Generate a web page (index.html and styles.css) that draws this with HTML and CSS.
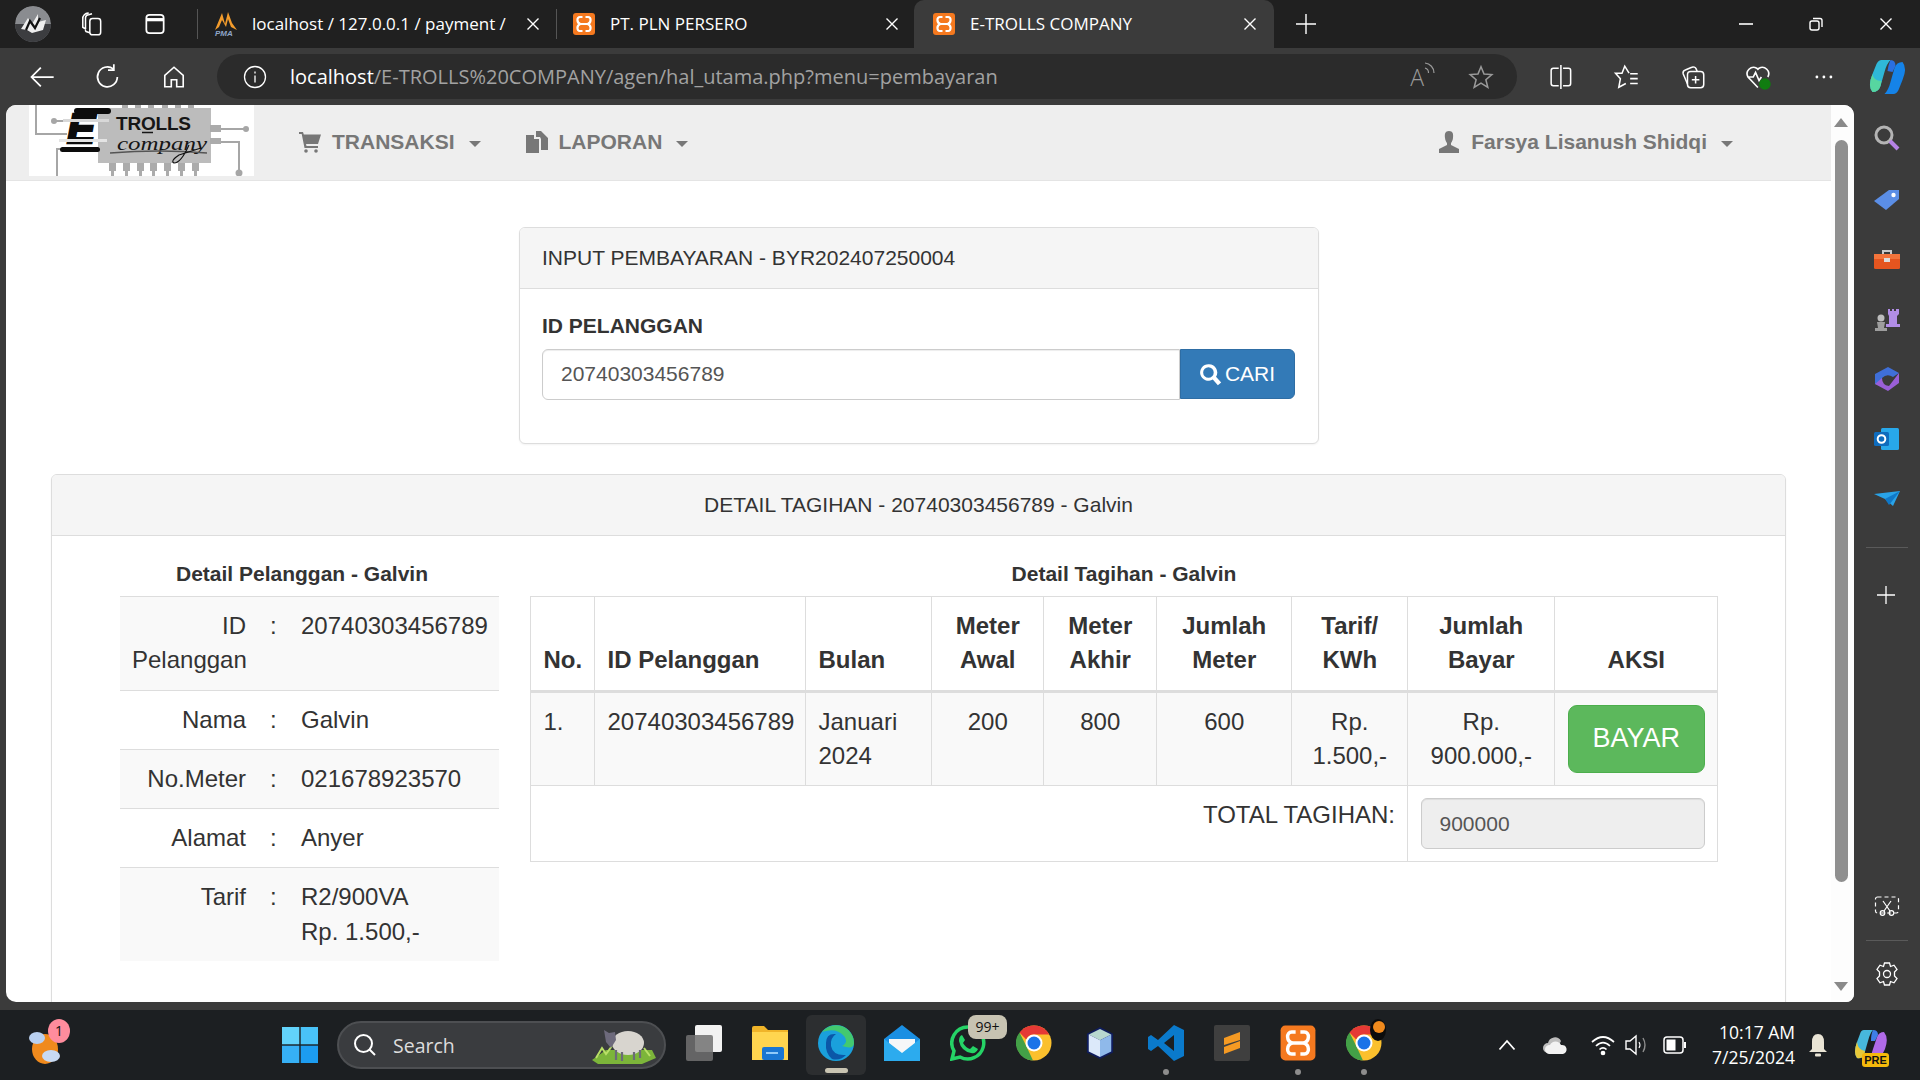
FILE: index.html
```html
<!DOCTYPE html>
<html lang="id">
<head>
<meta charset="utf-8">
<title>E-TROLLS COMPANY</title>
<link rel="stylesheet" href="styles.css">
</head>
<body>
<svg class="sprite" width="0" height="0">
  <defs>
    <symbol id="xampp" viewBox="0 0 24 24">
      <rect x="1" y="1" width="22" height="22" rx="3" fill="#f5791f"/>
      <path d="M10.500 5H8C4.500 5 4.500 11 8.500 12C4.500 13 4.500 19 8 19H10.500M13.500 5H16C19.500 5 19.500 11 15.500 12C19.500 13 19.500 19 16 19H13.500M8.500 12H15.500" fill="none" stroke="#fff" stroke-width="2.200"/>
    </symbol>
    <symbol id="close" viewBox="0 0 16 16">
      <path d="M2.500 2.500L13.500 13.500M13.500 2.500L2.500 13.500" stroke="#fff" stroke-width="1.400" fill="none"/>
    </symbol>
    <symbol id="chrome" viewBox="0 0 36 36">
      <circle cx="18" cy="18" r="17.500" fill="#fbc02d"/>
      <path d="M18 .5A17.500 17.500 0 0 1 33.200 9.500H18A8.500 8.500 0 0 0 10.200 14.500L3.500 7.500A17.500 17.500 0 0 1 18 .5Z" fill="#e53935"/>
      <path d="M3.500 7.500L10.500 21.500L17 35.500A17.500 17.500 0 0 1 3.500 7.500Z" fill="#43a047"/>
      <circle cx="18" cy="18" r="8.500" fill="#fff"/>
      <circle cx="18" cy="18" r="6.500" fill="#1a73e8"/>
    </symbol>
    <symbol id="magnify" viewBox="0 0 20 20">
      <path d="M8.200 1A7.200 7.200 0 1 0 12 14.300L16.400 19.400L19.300 17L14.800 11.900A7.200 7.200 0 0 0 8.200 1ZM8.200 3.600A4.600 4.600 0 1 1 8.200 12.800A4.600 4.600 0 0 1 8.200 3.600Z" fill="#fff"/>
    </symbol>
  </defs>
</svg>

<header class="tabstrip">
  <span class="profile">
    <svg viewBox="0 0 36 36" width="36" height="36"><circle cx="18" cy="18" r="18" fill="#8a8c90"/><path d="M0 18H36V22A18 18 0 0 1 0 22Z" fill="#3c3d40"/><path d="M6 23L13 12L17 18L23 8L23 16L31 14L28 24L17 27L12 24Z" fill="#eee"/><path d="M11 24L15 15L20 22L25 12" stroke="#111" stroke-width="2.200" fill="none"/></svg>
  </span>
  <span class="strip-btn strip-btn-first">
    <svg viewBox="0 0 24 24" width="26" height="26" fill="none" stroke="#fff" stroke-width="1.400"><rect x="10" y="7" width="10" height="15" rx="2.500"/><path d="M10 20L6.500 19A2 2 0 0 1 6 17.500V6A3 3 0 0 1 9 3.500L12 2.500M6.500 17L3.500 15V7.500A5 5 0 0 1 9 2"/></svg>
  </span>
  <span class="strip-btn">
    <svg viewBox="0 0 24 24" width="26" height="26" fill="none" stroke="#fff" stroke-width="1.600"><rect x="4" y="3.500" width="16" height="17" rx="3"/><path d="M4 8H20" stroke-width="3"/></svg>
  </span>
  <span class="tab-sep tab-sep-first"></span>
  <div class="tab tab-first">
    <svg class="tab-icon" viewBox="0 0 24 24" width="24" height="24"><path d="M1 18L8 1L11 12L14 0L18 11L23 18L17 15L14 7L12 15L8 8L5 15Z" fill="#f39c2c"/><text x="1" y="24" class="pma">PMA</text></svg>
    <span class="tab-text">localhost / 127.0.0.1 / payment /</span>
    <svg class="tab-x" width="16" height="16"><use href="#close"/></svg>
  </div>
  <span class="tab-sep"></span>
  <div class="tab tab-second">
    <svg class="tab-icon" width="24" height="24"><use href="#xampp"/></svg>
    <span class="tab-text">PT. PLN PERSERO</span>
    <svg class="tab-x" width="16" height="16"><use href="#close"/></svg>
  </div>
  <div class="tab tab-active">
    <svg class="tab-icon" width="24" height="24"><use href="#xampp"/></svg>
    <span class="tab-text">E-TROLLS COMPANY</span>
    <svg class="tab-x" width="16" height="16"><use href="#close"/></svg>
  </div>
  <svg class="new-tab" viewBox="0 0 22 22" width="22" height="22"><path d="M11 1V21M1 11H21" stroke="#fff" stroke-width="1.400"/></svg>
  <div class="win-controls">
    <svg viewBox="0 0 16 16" width="16" height="16"><path d="M1 8H15" stroke="#fff" stroke-width="1.600"/></svg>
    <svg viewBox="0 0 16 16" width="16" height="16" fill="none" stroke="#fff" stroke-width="1.400"><rect x="2" y="5" width="9" height="9" rx="2"/><path d="M5 2.500H12A2 2 0 0 1 14 4.500V11"/></svg>
    <svg viewBox="0 0 16 16" width="16" height="16"><use href="#close"/></svg>
  </div>
</header>

<nav class="toolbar">
  <svg class="tool-back" viewBox="0 0 24 24" width="28" height="28" fill="none" stroke="#fff" stroke-width="1.500"><path d="M22 12H3M11 4L3 12L11 20"/></svg>
  <svg class="tool-reload" viewBox="0 0 24 24" width="28" height="28" fill="none" stroke="#fff" stroke-width="1.500"><path d="M20 12A8.500 8.500 0 1 1 16.500 5M17 1V6H12"/></svg>
  <svg class="tool-home" viewBox="0 0 24 24" width="26" height="26" fill="none" stroke="#fff" stroke-width="1.500"><path d="M3.500 10.500L12 3L20.500 10.500V21H14.500V14.500H9.500V21H3.500Z"/></svg>
  <div class="addressbar">
    <svg viewBox="0 0 24 24" width="24" height="24" fill="none" stroke="#fff" stroke-width="1.300"><circle cx="12" cy="12" r="10.500"/><path d="M12 10.500V17.500M12 6.500V8.500"/></svg>
    <span class="url"><span class="url-host">localhost</span>/E-TROLLS%20COMPANY/agen/hal_utama.php?menu=pembayaran</span>
    <span class="read-aloud">A<svg viewBox="0 0 12 16" width="12" height="16" fill="none" stroke="#9a9a9a" stroke-width="1.200"><path d="M1 7A5 5 0 0 1 4.500 12M1 2A10 10 0 0 1 10 12"/></svg></span>
    <svg class="addr-star" viewBox="0 0 24 24" width="26" height="26" fill="none" stroke="#9a9a9a" stroke-width="1.400"><path d="M12 2.500L14.800 9.300L22 9.800L16.500 14.500L18.300 21.500L12 17.700L5.700 21.500L7.500 14.500L2 9.800L9.200 9.300Z"/></svg>
  </div>
  <div class="tool-right">
    <svg viewBox="0 0 24 24" width="26" height="26" fill="none" stroke="#fff" stroke-width="1.400"><path d="M12 1V23M10 4H5A2 2 0 0 0 3 6V18A2 2 0 0 0 5 20H10M14 4H19A2 2 0 0 1 21 6V18A2 2 0 0 1 19 20H14"/></svg>
    <svg viewBox="0 0 24 24" width="26" height="26" fill="none" stroke="#fff" stroke-width="1.400"><path d="M14 8.500L10 2L7.500 8.500H1.500L6 13.500L4.500 21.500L11 18M15 9H22M15 13.500H22M15 18H22"/></svg>
    <svg viewBox="0 0 24 24" width="26" height="26" fill="none" stroke="#fff" stroke-width="1.400"><rect x="7" y="7" width="15" height="15" rx="3"/><path d="M14.500 11V18M11 14.500H18M7 18.500L3 9A3 3 0 0 1 5 5.500L11 3A3 3 0 0 1 15 4.500L16 7"/></svg>
    <svg viewBox="0 0 24 24" width="28" height="28"><path d="M12 21L3.500 12A5.500 5.500 0 0 1 11 4.500L12 5.500L13 4.500A5.500 5.500 0 0 1 20.500 12M4 12H8L10 8L13 15L15 12" fill="none" stroke="#fff" stroke-width="1.400"/><circle cx="18" cy="18" r="5" fill="#107c10"/></svg>
    <svg viewBox="0 0 24 24" width="24" height="24" fill="#fff"><circle cx="5" cy="12" r="1.400"/><circle cx="12" cy="12" r="1.400"/><circle cx="19" cy="12" r="1.400"/></svg>
    <svg class="tool-copilot" viewBox="0 0 36 36" width="36" height="36"><path d="M12 1H21Q17 5 15 13L11 27Q9 33 3 33Q-2 27 3 15L7 5Q9 1 12 1Z" fill="#2fb8d8"/><path d="M3 15Q-2 27 3 33Q9 33 11 27L12 22Q4 22 3 15Z" fill="#57d6a0"/><path d="M24 35H15Q19 31 21 23L25 9Q27 3 33 3Q38 9 33 21L29 31Q27 35 24 35Z" fill="#1583e8"/><path d="M21 1Q26 1 26 7L23 13L18 12Q19 5 21 1Z" fill="#2a6fe0"/></svg>
  </div>
</nav>

<div class="frame">
  <div class="page">
    <main class="page-main">
      <div class="navbar">
        <svg class="logo" viewBox="0 0 225 71" width="225" height="71">
          <rect width="225" height="71" fill="#fff"/>
          <g fill="none" stroke="#a6a6a6" stroke-width="2">
            <path d="M7 0V29H38"/>
            <path d="M25 16H40"/>
            <path d="M28 71V44H36"/>
            <path d="M182 24H217"/>
            <path d="M182 37H210V68"/>
          </g>
          <circle cx="25" cy="16" r="3" fill="#a6a6a6"/>
          <circle cx="217" cy="24" r="3" fill="#a6a6a6"/>
          <circle cx="210" cy="68" r="3.500" fill="#a6a6a6"/>
          <rect x="69" y="3" width="113" height="55" fill="#bcbcbc"/>
          <g fill="#ababab">
            <rect x="93" y="0" width="6" height="3"/><rect x="106" y="0" width="6" height="3"/><rect x="119" y="0" width="6" height="3"/><rect x="133" y="0" width="6" height="3"/><rect x="146" y="0" width="6" height="3"/><rect x="159" y="0" width="6" height="3"/>
            <rect x="181" y="20" width="11" height="7"/><rect x="181" y="33" width="11" height="6"/>
            <rect x="80" y="58" width="7" height="8"/><rect x="94" y="58" width="7" height="8"/><rect x="108" y="58" width="7" height="8"/><rect x="121" y="58" width="7" height="8"/><rect x="135" y="58" width="7" height="8"/><rect x="149" y="58" width="7" height="8"/><rect x="163" y="58" width="7" height="8"/>
            <rect x="82" y="66" width="3" height="5"/><rect x="96" y="66" width="3" height="5"/><rect x="110" y="66" width="3" height="5"/><rect x="123" y="66" width="3" height="5"/><rect x="137" y="66" width="3" height="5"/><rect x="151" y="66" width="3" height="5"/><rect x="165" y="66" width="3" height="5"/>
          </g>
          <text x="38" y="38" class="logo-e">E</text>
          <rect x="45" y="3" width="37" height="6" rx="3" fill="#0c0c0c"/>
          <rect x="31" y="42" width="40" height="5" rx="2.500" fill="#0c0c0c"/>
          <rect x="34" y="14" width="46" height="3" fill="#d8d8d8"/>
          <rect x="30" y="34" width="48" height="3" fill="#e4e4e4"/>
          <text x="87" y="25" class="logo-trolls" textLength="75" lengthAdjust="spacing">TROLLS</text>
          <path d="M113 27.500H124" stroke="#161616" stroke-width="1.500"/>
          <text x="88" y="45" class="logo-company" textLength="90" lengthAdjust="spacingAndGlyphs">company</text>
          <path d="M81 48Q130 44 178 48" stroke="#555" stroke-width="1.500" fill="none"/>
          <path d="M160 40Q152 58 145 58Q141 56 150 50L172 43" stroke="#111" stroke-width="1.100" fill="none"/>
        </svg>
        <ul class="nav-list">
          <li class="nav-item nav-cart">
            <svg viewBox="0 0 22 22" width="22" height="22" fill="#777"><path d="M0 1H4L4.800 3.500H22L19 13H7L7.500 15H19V17H5.500L2.700 3H0Z"/><circle cx="7" cy="20" r="1.800"/><circle cx="17" cy="20" r="1.800"/></svg>
            <span>TRANSAKSI</span><i class="caret"></i>
          </li>
          <li class="nav-item nav-report">
            <svg viewBox="0 0 22 22" width="22" height="22" fill="#777"><path d="M0 4H8V8H13V22H0Z"/><path d="M10 0H14V6H10Z"/><path d="M15 0L22 7V19H15V8L14 6V0Z"/></svg>
            <span>LAPORAN</span><i class="caret"></i>
          </li>
          <li class="nav-item nav-user">
            <svg viewBox="0 0 22 22" width="22" height="22" fill="#777"><path d="M11 0C7 0 6.500 3 7 7C7.300 9.500 8.200 11 9 12V14L1 18V22H21V18L13 14V12C13.800 11 14.700 9.500 15 7C15.500 3 15 0 11 0Z"/></svg>
            <span>Farsya Lisanush Shidqi</span><i class="caret"></i>
          </li>
        </ul>
      </div>

      <section class="panel panel-input">
        <div class="panel-heading">INPUT PEMBAYARAN - BYR202407250004</div>
        <div class="panel-body">
          <label class="field-label">ID PELANGGAN</label>
          <div class="input-group">
            <div class="form-input">20740303456789</div>
            <button class="btn-cari"><svg width="23" height="23"><use href="#magnify"/></svg>CARI</button>
          </div>
        </div>
      </section>

      <section class="panel panel-detail">
        <div class="panel-heading heading-center">DETAIL TAGIHAN - 20740303456789 - Galvin</div>
        <div class="detail-body">
          <div>
            <div class="col-title col-title-left">Detail Pelanggan - Galvin</div>
            <table class="info-table">
              <colgroup><col class="info-c1"><col class="info-c2"><col></colgroup>
              <tr><td class="lbl">ID Pelanggan</td><td>:</td><td>20740303456789</td></tr>
              <tr><td class="lbl">Nama</td><td>:</td><td>Galvin</td></tr>
              <tr><td class="lbl">No.Meter</td><td>:</td><td>021678923570</td></tr>
              <tr><td class="lbl">Alamat</td><td>:</td><td>Anyer</td></tr>
              <tr><td class="lbl">Tarif</td><td>:</td><td>R2/900VA<br>Rp. 1.500,-</td></tr>
            </table>
          </div>
          <div>
            <div class="col-title">Detail Tagihan - Galvin</div>
            <table class="bill-table">
              <colgroup><col class="b1"><col class="b2"><col class="b3"><col class="b4"><col class="b5"><col class="b6"><col class="b7"><col class="b8"><col class="b9"></colgroup>
              <thead>
                <tr>
                  <th>No.</th><th>ID Pelanggan</th><th>Bulan</th>
                  <th class="ctr">Meter Awal</th><th class="ctr">Meter Akhir</th><th class="ctr">Jumlah Meter</th>
                  <th class="ctr">Tarif/ KWh</th><th class="ctr">Jumlah Bayar</th><th class="ctr">AKSI</th>
                </tr>
              </thead>
              <tbody>
                <tr class="striped">
                  <td>1.</td><td>20740303456789</td><td>Januari 2024</td>
                  <td class="ctr">200</td><td class="ctr">800</td><td class="ctr">600</td>
                  <td class="ctr">Rp. 1.500,-</td><td class="ctr">Rp. 900.000,-</td>
                  <td><button class="btn-bayar">BAYAR</button></td>
                </tr>
                <tr>
                  <td colspan="7" class="total-label">TOTAL TAGIHAN:</td>
                  <td colspan="2"><div class="form-input input-disabled">900000</div></td>
                </tr>
              </tbody>
            </table>
          </div>
        </div>
      </section>
    </main>
    <aside class="scrollbar">
      <i class="sb-up"></i>
      <div class="sb-track"><div class="sb-thumb"></div></div>
      <i class="sb-down"></i>
    </aside>
  </div>

  <aside class="sidebar">
    <svg viewBox="0 0 28 28" width="28" height="28" class="sb-ic"><circle cx="11" cy="10" r="8" fill="none" stroke="#b4b4b4" stroke-width="3"/><path d="M17 16L25 24" stroke="#b682e6" stroke-width="4"/></svg>
    <svg viewBox="0 0 28 28" width="28" height="28" class="sb-ic"><path d="M1 16L16 5H26V14L13 25Z" fill="#5b8ee6"/><circle cx="20.500" cy="10" r="2.200" fill="#fff"/></svg>
    <svg viewBox="0 0 28 28" width="28" height="28" class="sb-ic"><path d="M10 9V6H18V9" fill="none" stroke="#c8c8c8" stroke-width="2"/><rect x="1" y="9" width="26" height="15" rx="1.500" fill="#e5551f"/><rect x="1" y="9" width="26" height="5" fill="#f4743b"/><rect x="11" y="13" width="6" height="4" fill="#ddd"/></svg>
    <svg viewBox="0 0 28 28" width="28" height="28" class="sb-ic"><path d="M15 4H17V6H19V4H21V6H23V4H26V9L24 11V19H27V22H13V19H16V11L15 9Z" fill="#b18de6"/><circle cx="8" cy="13" r="3.500" fill="#bdbdbd"/><path d="M4 17H12L11 23H14V26H2V23H5Z" fill="#9d9d9d"/></svg>
    <svg viewBox="0 0 28 28" width="28" height="28" class="sb-ic"><path d="M2 9L15 2L26 8L20 12Q14 8 9 13V21L2 19Z" fill="#3f6fd8"/><path d="M2 19L9 13Q9 20 16 21L26 8V18L15 26Z" fill="#9a5fd8"/></svg>
    <svg viewBox="0 0 28 28" width="28" height="28" class="sb-ic"><rect x="8" y="3" width="18" height="22" rx="1.500" fill="#28a8ea"/><rect x="1" y="7" width="15" height="14" rx="1.500" fill="#0f6cbd"/><circle cx="8.500" cy="14" r="3.800" fill="none" stroke="#fff" stroke-width="2"/></svg>
    <svg viewBox="0 0 28 28" width="28" height="28" class="sb-ic"><path d="M1 9L27 6L20 21L12 14Z" fill="#29a3e8"/><path d="M12 14L27 6L16 20Z" fill="#0f78c8"/></svg>
    <span class="side-sep"></span>
    <svg viewBox="0 0 20 20" width="20" height="20" class="sb-plus"><path d="M10 1V19M1 10H19" stroke="#fff" stroke-width="1.300"/></svg>
    <span class="side-spacer"></span>
    <svg viewBox="0 0 26 26" width="26" height="26" class="sb-snip" fill="none" stroke="#fff" stroke-width="1.200"><rect x="1.500" y="4" width="23" height="16" rx="2" stroke-dasharray="4 3"/><path d="M9 8L16 18M17 8L10 18"/><circle cx="8.500" cy="20" r="2.300"/><circle cx="17.500" cy="20" r="2.300"/></svg>
    <span class="side-sep side-sep-low"></span>
    <svg viewBox="0 0 26 26" width="26" height="26" class="sb-gear" fill="none" stroke="#fff" stroke-width="1.300"><circle cx="13" cy="13" r="3.500"/><path d="M10.500 2H15.500L16.500 5.500L20 4.200L23 8.500L20.500 11V15L23 17.500L20 21.800L16.500 20.500L15.500 24H10.500L9.500 20.500L6 21.800L3 17.500L5.500 15V11L3 8.500L6 4.200L9.500 5.500Z"/></svg>
  </aside>
</div>

<footer class="taskbar">
  <div class="weather">
    <svg viewBox="0 0 40 44" width="40" height="44"><ellipse cx="18" cy="26" rx="13" ry="15" fill="#f08a1d"/><ellipse cx="10" cy="15" rx="8" ry="6" fill="#b9d0f0"/><ellipse cx="24" cy="33" rx="9" ry="6" fill="#c8daf4"/></svg>
    <span class="badge-one">1</span>
  </div>
  <svg class="winlogo" viewBox="0 0 36 36" width="36" height="36"><rect x="0" y="0" width="17.300" height="17.300" fill="#62d3fb"/><rect x="18.700" y="0" width="17.300" height="17.300" fill="#49c2f8"/><rect x="0" y="18.700" width="17.300" height="17.300" fill="#36b0f5"/><rect x="18.700" y="18.700" width="17.300" height="17.300" fill="#1c9cf0"/></svg>
  <div class="searchbox">
    <svg viewBox="0 0 24 24" width="24" height="24" fill="none" stroke="#fff" stroke-width="2"><circle cx="10.500" cy="10.500" r="8.500"/><path d="M16.500 16.500L22 22"/></svg>
    <span class="search-text">Search</span>
    <svg class="sheep" viewBox="0 0 64 36" width="64" height="36"><path d="M0 32L14 22L60 22L64 30L50 36H6Z" fill="#7cb53a"/><path d="M4 30L10 20L14 26L20 18M52 20L58 28" stroke="#b9e067" stroke-width="2" fill="none"/><ellipse cx="36" cy="15" rx="16" ry="12" fill="#d8d5cf"/><path d="M24 22V32M30 24V33M42 24V32M48 22V30" stroke="#6b6b78" stroke-width="2.200"/><path d="M12 2L17 5L23 4L24 12L19 20L14 14Z" fill="#6d6a7c"/></svg>
  </div>
  <div class="task-icons">
    <span class="task-btn"><svg viewBox="0 0 36 36" width="36" height="36"><rect x="9" y="0" width="27" height="27" rx="2" fill="#f2f2f2"/><rect x="0" y="10" width="27" height="26" rx="2" fill="#717171" fill-opacity=".85"/></svg></span>
    <span class="task-btn"><svg viewBox="0 0 36 36" width="36" height="36"><path d="M0 3Q0 1 2 1H12L16 5H36V35H0Z" fill="#f0b429"/><rect y="7" width="36" height="28" fill="#ffd54f"/><rect x="10" y="22" width="22" height="13" rx="2" fill="#1976d2"/><rect x="14" y="27" width="12" height="2" fill="#90caf9"/></svg></span>
    <span class="task-btn task-btn-active"><svg viewBox="0 0 36 36" width="36" height="36"><circle cx="18" cy="18" r="18" fill="#1aa0dc"/><path d="M36 18A18 18 0 0 0 4 7Q18 2 26 11Q31 17 24 21Q36 25 36 18Z" fill="#43c96f"/><path d="M8 18Q8 8 18 9Q12 13 13 21Q15 31 28 30Q22 36 14 34Q7 28 8 18Z" fill="#0b57a8"/></svg><i class="active-bar"></i></span>
    <span class="task-btn"><svg viewBox="0 0 36 36" width="36" height="36"><path d="M0 14L18 0L36 14V36H0Z" fill="#1a8fe3"/><path d="M5 14H31V21L18 30L5 21Z" fill="#f6f7f8"/><path d="M0 14L18 28L36 14V36H0Z" fill="#2cabee"/></svg></span>
    <span class="task-btn"><svg viewBox="0 0 36 36" width="36" height="36"><path d="M18 2A16 16 0 0 0 4 26L2 34L10 32A16 16 0 1 0 18 2Z" fill="none" stroke="#25d366" stroke-width="3.500"/><path d="M12 10L15 15L13 18Q16 23 20 24L23 21L28 24Q26 29 21 28Q11 26 9 16Q9 11 12 10Z" fill="#25d366"/></svg><b class="badge-99">99+</b></span>
    <span class="task-btn"><svg width="36" height="36"><use href="#chrome"/></svg></span>
    <span class="task-btn"><svg viewBox="0 0 32 36" width="30" height="36"><path d="M16 1L30 8V28L16 35L2 28V8Z" fill="#0f1c5c"/><path d="M16 3L28 9L16 15L4 9Z" fill="#b8d8cf"/><path d="M4 9L16 15V33L4 27Z" fill="#dce9fa"/><path d="M28 9L16 15V33L28 27Z" fill="#8fb9ea"/></svg></span>
    <span class="task-btn"><svg viewBox="0 0 36 36" width="36" height="36"><path d="M26 0L36 5V31L26 36L10 21L3 26L0 24V12L3 10L10 15ZM26 10L16 18L26 26Z" fill="#0a7acc"/></svg><i class="dot"></i></span>
    <span class="task-btn"><svg viewBox="0 0 36 36" width="36" height="36"><rect width="36" height="36" rx="2" fill="#3f3f3f"/><path d="M26 7L10 13V20L26 15ZM26 16L10 22V29L26 23Z" fill="#f59a23"/></svg></span>
    <span class="task-btn"><svg width="38" height="38"><use href="#xampp"/></svg><i class="dot"></i></span>
    <span class="task-btn"><svg width="36" height="36"><use href="#chrome"/></svg><svg class="chrome-badge" viewBox="0 0 18 24" width="18" height="24"><ellipse cx="9" cy="12" rx="8" ry="11" fill="#0c0c0c"/><circle cx="10" cy="9" r="6" fill="#f08a1d"/></svg><i class="dot"></i></span>
  </div>
  <div class="tray">
    <svg class="tr-chev" viewBox="0 0 18 12" width="18" height="12" fill="none" stroke="#fff" stroke-width="1.800"><path d="M1.500 10.500L9 2L16.500 10.500"/></svg>
    <svg class="tr-cloud" viewBox="0 0 26 20" width="26" height="20"><path d="M6 8A7 7 0 0 1 19 6L13 18H6A5 5 0 0 1 6 8Z" fill="#bdbdbd"/><path d="M7 19A4.500 4.500 0 0 1 8 10A6 6 0 0 1 19 10A4.500 4.500 0 0 1 21 19Z" fill="#f2f2f2"/></svg>
    <svg class="tr-wifi" viewBox="0 0 24 22" width="24" height="22" fill="none" stroke="#fff" stroke-width="1.700"><path d="M1 8Q12 -2 23 8M5 12Q12 5 19 12M8.500 15.500Q12 12 15.500 15.500"/><circle cx="12" cy="19" r="1.500" fill="#fff"/></svg>
    <svg class="tr-vol" viewBox="0 0 26 24" width="26" height="24" fill="none" stroke="#fff" stroke-width="1.400"><path d="M1 8H5L11 3V21L5 16H1Z"/><path d="M14 9Q16 12 14 15" stroke-width="1.100"/><path d="M18 5Q22 12 18 19" stroke="#8e8e8e"/></svg>
    <svg class="tr-batt" viewBox="0 0 24 18" width="24" height="18"><rect x="1" y="1" width="19" height="16" rx="3" fill="none" stroke="#fff" stroke-width="1.500"/><rect x="3.500" y="3.500" width="9" height="11" fill="#fff"/><rect x="21" y="6" width="2" height="6" fill="#fff"/></svg>
    <div class="clock"><span>10:17 AM</span><span>7/25/2024</span></div>
    <svg class="tr-bell" viewBox="0 0 22 24" width="22" height="24" fill="#e9e4d5"><path d="M11 1Q17 1 17 9V16L20 19H2L5 16V9Q5 1 11 1Z"/><rect x="8" y="20.500" width="6" height="3" rx="1"/></svg>
    <div class="copilot-pre">
      <svg viewBox="0 0 34 32" width="34" height="32"><path d="M10 1H19Q16 4 14 12L10 26Q8 30 3 29Q-1 24 3 13L6 5Q7 1 10 1Z" fill="#47b8dc"/><path d="M3 13Q-1 24 3 29Q8 30 10 26L11 22Q4 21 3 13Z" fill="#e8c93a"/><path d="M22 31H13Q17 28 19 20L23 8Q25 3 30 3Q35 9 31 20L27 28Q25 31 22 31Z" fill="#b06ae8"/><path d="M19 1Q24 1 24 6L21 12L17 12Q17 5 19 1Z" fill="#3f7ee8"/></svg>
      <span class="pre">PRE</span>
    </div>
  </div>
</footer>
</body>
</html>
```

FILE: styles.css
```css
* { box-sizing: border-box; }
html, body { margin: 0; height: 100%; }
body {
  width: 1920px;
  height: 1080px;
  overflow: hidden;
  display: flex;
  flex-direction: column;
  background: #3b3b3b;
  font-family: "Liberation Sans", Arial, sans-serif;
  color: #333;
}
.sprite { position: absolute; }
svg { display: block; flex: none; }

/* tab strip */
.tabstrip {
  height: 48px;
  background: #202020;
  display: flex;
  align-items: center;
  color: #fff;
  font-family: "Open Sans", "Noto Sans", sans-serif;
  font-size: 17px;
}
.profile { width: 36px; height: 36px; margin-left: 15px; border-radius: 50%; overflow: hidden; }
.strip-btn { width: 63px; display: flex; justify-content: center; }
.strip-btn-first { margin-left: 9px; }
.tab-sep { width: 1px; height: 30px; background: #555; }
.tab-sep-first { margin-left: 11px; }
.tab { height: 48px; display: flex; align-items: center; flex: none; }
.tab-first { width: 358px; padding: 0 15px 0 16px; }
.tab-second { width: 357px; padding: 0 14px 0 15px; }
.tab-active {
  width: 360px;
  padding: 0 16px 0 18px;
  background: #3b3b3b;
  border-radius: 10px 10px 0 0;
}
.tab-icon { margin-right: 14px; }
.tab-text { flex: 1; min-width: 0; overflow: hidden; white-space: nowrap; padding-bottom: 2px; }
.tab-x { margin-left: 8px; }
.pma { font: italic bold 8px "Liberation Sans", sans-serif; fill: #8fa6c8; }
.new-tab { margin-left: 21px; }
.win-controls { margin-left: auto; display: flex; gap: 54px; padding-right: 26px; }

/* toolbar */
.toolbar {
  height: 57px;
  background: #3b3b3b;
  display: flex;
  align-items: center;
}
.tool-back { margin-left: 28px; }
.tool-reload { margin-left: 38px; }
.tool-home { margin-left: 39px; }
.addressbar {
  width: 1300px;
  height: 45px;
  margin-left: 30px;
  padding: 0 16px 0 26px;
  border-radius: 23px;
  background: #2b2b2b;
  display: flex;
  align-items: center;
  font-family: "Open Sans", "Noto Sans", sans-serif;
  font-size: 20px;
}
.url { margin-left: 23px; color: #a2a2a2; white-space: nowrap; }
.url-host { color: #fff; }
.read-aloud {
  margin-left: auto;
  display: flex;
  color: #9a9a9a;
  font-size: 23px;
  font-weight: 300;
}
.addr-star { margin-left: 32px; margin-right: 7px; }
.tool-right {
  flex: none;
  display: flex;
  align-items: center;
  padding-left: 11px;
}
.tool-right svg { width: 65.800px; }
.tool-right .tool-copilot { width: 61px; }

/* page frame */
.frame { height: 897px; display: flex; }
.page {
  width: 1848px;
  margin-left: 6px;
  background: #fff;
  border-radius: 10px 10px 8px 10px;
  overflow: hidden;
  display: flex;
}
.page-main { width: 1825px; overflow: hidden; font-size: 21px; line-height: 30px; }
.navbar {
  height: 76px;
  background: #eee;
  border-bottom: 1px solid #e4e4e4;
  display: flex;
  padding-left: 23px;
}
.logo-e { font: italic 900 42px "Liberation Sans", sans-serif; fill: #0c0c0c; stroke: #0c0c0c; stroke-width: 2.500px; }
.logo-trolls { font: bold 19px "Liberation Sans", sans-serif; fill: #161616; }
.logo-company { font: italic 18px "Liberation Serif", serif; fill: #161616; }
.nav-list {
  flex: 1;
  list-style: none;
  margin: 0;
  padding: 0;
  display: flex;
  align-items: center;
  color: #777;
  font-weight: 700;
  height: 74px;
}
.nav-item { display: flex; align-items: center; }
.nav-item svg { margin-right: 11px; }
.nav-cart { margin-left: 45px; }
.nav-report { margin-left: 45px; }
.nav-user { margin-left: auto; margin-right: 98px; }
.caret {
  width: 0;
  height: 0;
  margin-left: 14px;
  margin-top: 3px;
  border-top: 6px solid #777;
  border-left: 6px solid transparent;
  border-right: 6px solid transparent;
}

/* panels */
.panel {
  background: #fff;
  border: 1px solid #ddd;
  border-radius: 6px;
  box-shadow: 0 1px 2px rgba(0,0,0,.05);
}
.panel-input { width: 800px; margin: 46px auto 30px; }
.panel-detail { margin: 0 45px; }
.panel-heading {
  height: 61px;
  padding: 15px 22.500px;
  background: #f5f5f5;
  border-bottom: 1px solid #ddd;
  border-radius: 5px 5px 0 0;
}
.heading-center { text-align: center; }
.panel-body { padding: 22px 23px 22px 22.500px; height: 154px; }
.field-label { display: block; font-weight: 700; margin-bottom: 8px; }
.input-group { display: flex; height: 51px; }
.form-input {
  flex: 1;
  height: 51px;
  padding: 9px 18px;
  background: #fff;
  border: 1px solid #ccc;
  border-radius: 6px 0 0 6px;
  color: #555;
  box-shadow: inset 0 1px 1px rgba(0,0,0,.075);
}
.btn-cari {
  width: 115px;
  height: 50px;
  display: flex;
  align-items: center;
  justify-content: center;
  gap: 3px;
  padding: 0;
  background: #337ab7;
  border: 1px solid #2e6da4;
  border-radius: 0 6px 6px 0;
  color: #fff;
  font: 21px "Liberation Sans", sans-serif;
}
.detail-body {
  display: grid;
  grid-template-columns: 379px 1188px;
  column-gap: 31px;
  padding: 22px 0 70px 68px;
  font-size: 24px;
  line-height: 34.286px;
}
.col-title {
  height: 38px;
  padding-top: 1px;
  font-size: 21px;
  line-height: 30px;
  font-weight: 700;
  text-align: center;
}
.col-title-left { padding-right: 15px; }
table { border-collapse: collapse; width: 100%; table-layout: fixed; }
td, th { padding: 12px; vertical-align: top; }
.info-c1 { width: 138px; }
.info-c2 { width: 31px; }
.info-table td { border-top: 1px solid #ddd; }
.info-table tr:nth-child(odd) { background: #f9f9f9; }
.lbl { text-align: right; }
.b1 { width: 64px; }
.b2 { width: 211px; }
.b3 { width: 126px; }
.b4 { width: 112px; }
.b5 { width: 113px; }
.b6 { width: 135px; }
.b7 { width: 116px; }
.b8 { width: 147px; }
.bill-table { border: 1px solid #ddd; }
.bill-table td, .bill-table th { border: 1px solid #ddd; padding-left: 12.500px; }
.bill-table th {
  vertical-align: bottom;
  border-bottom: 3px solid #ddd;
  text-align: left;
}
.bill-table .ctr { text-align: center; }
.striped { background: #f9f9f9; }
.btn-bayar {
  display: block;
  width: 100%;
  height: 68px;
  padding: 0;
  background: #5cb85c;
  border: 1px solid #4cae4c;
  border-radius: 9px;
  color: #fff;
  font: 27px "Liberation Sans", sans-serif;
}
.total-label { text-align: right; }
.input-disabled {
  background: #eee;
  border-radius: 6px;
  font-size: 21px;
  line-height: 30px;
  padding-top: 10px;
}

/* scrollbar */
.scrollbar {
  width: 23px;
  background: #fdfdfd;
  display: flex;
  flex-direction: column;
  align-items: center;
  padding: 13px 3px 11px 0;
}
.sb-up, .sb-down {
  width: 0;
  height: 0;
  border-left: 7px solid transparent;
  border-right: 7px solid transparent;
}
.sb-up { border-bottom: 9px solid #8a8a8a; }
.sb-down { border-top: 9px solid #8a8a8a; }
.sb-track { flex: 1; width: 13px; padding-top: 13px; }
.sb-thumb { height: 742px; background: #8f8f8f; border-radius: 7px; }

/* sidebar */
.sidebar {
  flex: 1;
  display: flex;
  flex-direction: column;
  align-items: center;
  padding: 20px 0 15px 0;
}
.sb-ic { margin-bottom: 32px; }
.side-sep { width: 42px; height: 1px; background: #5a5a5a; flex: none; margin-top: 2px; }
.sb-plus { margin-top: 37px; margin-left: -3px; }
.side-spacer { flex: 1; }
.sb-snip { margin-bottom: 21px; }
.side-sep-low { margin: 0; }
.sb-gear { margin-top: 20px; }

/* taskbar */
.taskbar {
  margin-top: 8px;
  height: 70px;
  background: #1c1f22;
  display: flex;
  align-items: center;
  position: relative;
  color: #fff;
  font-family: "Open Sans", "Noto Sans", sans-serif;
}
.weather { width: 40px; margin-left: 27px; position: relative; }
.badge-one {
  position: absolute;
  left: 21px;
  top: -4px;
  width: 22px;
  height: 24px;
  background: #ff8c9d;
  border-radius: 50%;
  color: #111;
  font-size: 14px;
  line-height: 24px;
  text-align: center;
}
.winlogo { margin-left: 215px; }
.searchbox {
  width: 329px;
  height: 48px;
  margin-left: 19px;
  padding: 0 8px 0 14px;
  background: #3a3c3f;
  border: 2px solid #4d4f52;
  border-radius: 24px;
  display: flex;
  align-items: center;
  font-size: 19.500px;
  color: #ddd;
}
.search-text { margin-left: 16px; flex: 1; }
.sheep { margin-top: 2px; }
.task-icons { display: flex; margin-left: 5px; }
.task-btn {
  position: relative;
  width: 66px;
  height: 60px;
  display: flex;
  align-items: center;
  justify-content: center;
  padding-bottom: 4px;
}
.task-btn-active {
  width: 60px;
  margin: 0 3px;
  background: #2c2e30;
  border-radius: 6px;
}
.active-bar {
  position: absolute;
  left: 19px;
  bottom: 2px;
  width: 23px;
  height: 5px;
  border-radius: 3px;
  background: #c9c4b2;
}
.dot {
  position: absolute;
  left: 30px;
  bottom: 0;
  width: 6px;
  height: 6px;
  border-radius: 50%;
  background: #8d8d8d;
}
.badge-99 {
  position: absolute;
  right: -6px;
  top: 0;
  width: 39px;
  height: 24px;
  background: #c7c3b2;
  border-radius: 8px;
  color: #111;
  font-size: 14px;
  font-weight: 400;
  line-height: 24px;
  text-align: center;
}
.chrome-badge { position: absolute; left: 38px; top: 3px; }
.tray { position: absolute; right: 0; top: 0; height: 70px; width: 430px; display: flex; align-items: center; }
.tr-chev { margin-left: 8px; }
.tr-cloud { margin-left: 26px; }
.tr-wifi { margin-left: 23px; }
.tr-vol { margin-left: 10px; }
.tr-batt { margin-left: 12px; }
.clock {
  margin-left: 14px;
  width: 94px;
  display: flex;
  flex-direction: column;
  align-items: flex-end;
  font-size: 17.500px;
  line-height: 25px;
  white-space: nowrap;
}
.tr-bell { margin-left: 12px; }
.copilot-pre { position: relative; margin-left: 25px; }
.pre {
  position: absolute;
  left: 8px;
  top: 24px;
  width: 27px;
  height: 14px;
  background: #f5b90c;
  border-radius: 3px;
  color: #111;
  font: bold 11px/14px "Liberation Sans", sans-serif;
  text-align: center;
}
```
